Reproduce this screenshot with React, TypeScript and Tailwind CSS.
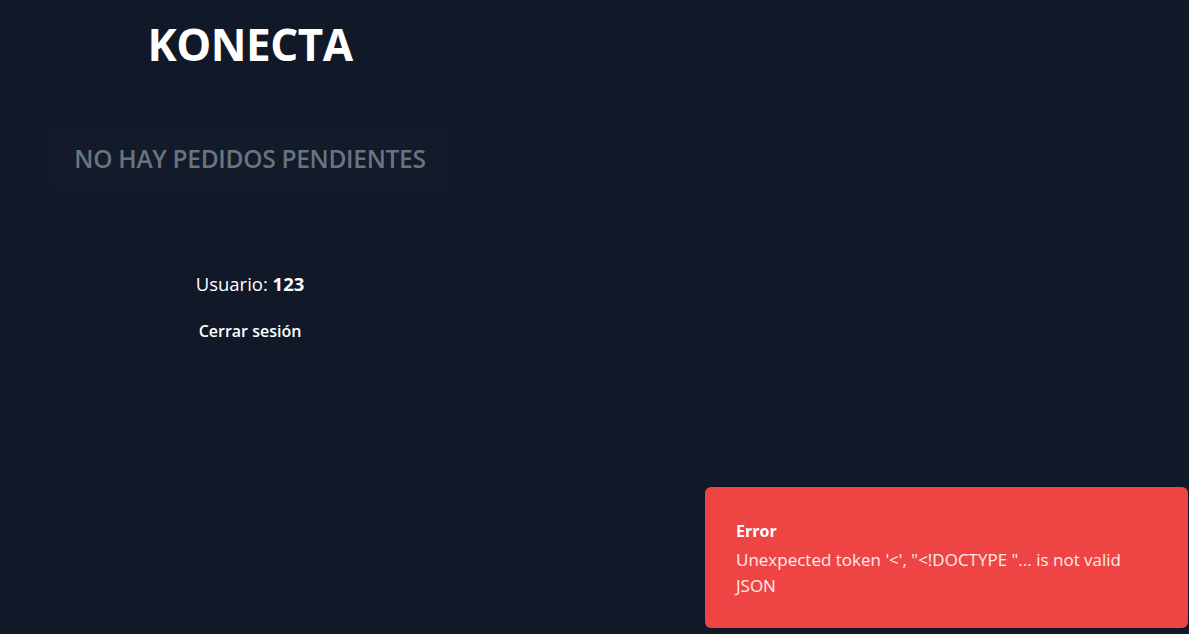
export default function App() {
  return (
    <div
      className="relative min-h-screen h-[634px] overflow-hidden bg-[#111827] text-white"
      style={{ fontFamily: '"Open Sans", "Noto Sans", sans-serif' }}
    >
      {/* Sidebar */}
      <aside className="flex w-[500px] flex-col items-center px-12 pt-[14px]">
        <h1 className="text-[44px] font-bold leading-[60px] tracking-[-0.5px]">KONECTA</h1>

        <div className="mt-[54px] flex h-[62px] w-[400px] items-center justify-center rounded-md bg-[#131a2a]">
          <p className="text-[24.5px] font-semibold tracking-[-0.3px] text-[#6b7280]">NO HAY PEDIDOS PENDIENTES</p>
        </div>

        <div className="mt-[80px] flex flex-col items-center">
          <p className="text-[18.5px] leading-[28px]">
            Usuario: <span className="font-bold">123</span>
          </p>
          <button className="mt-[21px] text-[16px] font-semibold leading-[24px] text-white">Cerrar sesión</button>
        </div>
      </aside>

      {/* Toast */}
      <div className="absolute bottom-[6px] right-[1px] w-[483px] rounded-md bg-[#ef4444] pb-[29px] pl-[31px] pr-[31px] pt-[32px]">
        <p className="text-[16px] font-bold leading-[24px]">Error</p>
        <p className="mt-[4px] text-[17px] leading-[26px] text-white/90">
          Unexpected token '&lt;', "&lt;!DOCTYPE "... is not valid JSON
        </p>
      </div>
    </div>
  );
}
